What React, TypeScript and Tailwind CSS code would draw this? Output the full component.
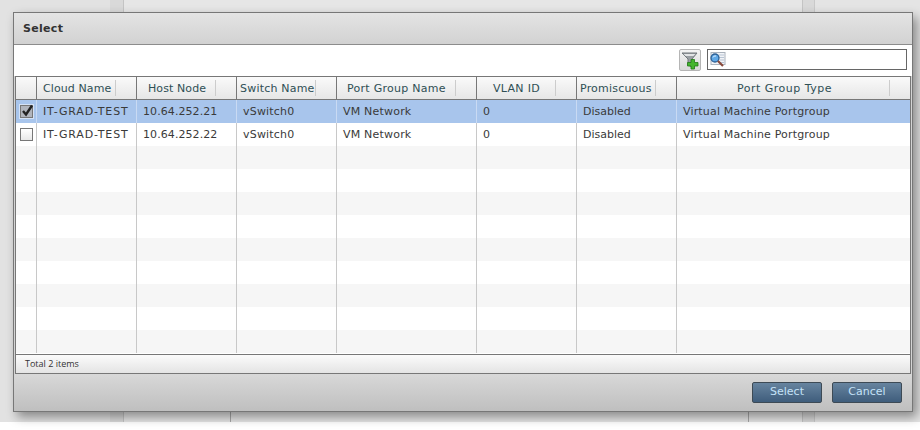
import React from 'react';

const font = { fontFamily: '"DejaVu Sans", Verdana, sans-serif' };

const columns = [
  { label: 'Cloud Name', width: 'w-[100px]', head: 'pl-[6px] tracking-[0.1px]' },
  { label: 'Host Node', width: 'w-[100px]', head: 'pl-[11px] tracking-[0.1px]' },
  { label: 'Switch Name', width: 'w-[100px]', head: 'pl-[3px] tracking-[0.2px]' },
  { label: 'Port Group Name', width: 'w-[140px]', head: 'pl-[10px] tracking-[0.27px]' },
  { label: 'VLAN ID', width: 'w-[100px]', head: 'pl-[16px] tracking-[0.3px]' },
  { label: 'Promiscuous', width: 'w-[100px]', head: 'pl-[3px] tracking-[0.2px]' },
  { label: 'Port Group Type', width: 'flex-1', head: 'pl-[60px] tracking-[0.5px]' },
];

const rows = [
  ['IT-GRAD-TEST', '10.64.252.21', 'vSwitch0', 'VM Network', '0', 'Disabled', 'Virtual Machine Portgroup'],
  ['IT-GRAD-TEST', '10.64.252.22', 'vSwitch0', 'VM Network', '0', 'Disabled', 'Virtual Machine Portgroup'],
];

const cellStyle = [
  'pl-[6px] tracking-[0.85px]',
  'pl-[6px] tracking-[0.08px]',
  'pl-[6px] tracking-[0.2px]',
  'pl-[6px] tracking-[0.2px]',
  'pl-[6px]',
  'pl-[6px]',
  'pl-[6px] tracking-[0.17px]',
];

function FilterIcon() {
  return (
    <svg width="20" height="20" viewBox="0 0 20 20">
      <path d="M2 3h15l-5 6v8l-4-2V9z" fill="#9a9fa3" stroke="#70777b" strokeWidth="1" />
      <path d="M3.500 4h12l-2 2h-8z" fill="#e2e4e5" />
      <path d="M11 9.500h3.500v3H18v3.500h-3.500v3H11v-3H7.500v-3.500H11z" fill="#45b52e" stroke="#1f7a14" strokeWidth="0.8" />
    </svg>
  );
}

function SearchIcon() {
  return (
    <svg width="17" height="17" viewBox="0 0 17 17">
      <rect x="2" y="1.500" width="14" height="12" fill="#f2f4f7" stroke="#aab2bc" />
      <path d="M9 4h6M10 6.500h5M11 9h4M11 11.500h4" stroke="#b8c4d4" strokeWidth="1" />
      <circle cx="6" cy="7" r="4" fill="#5fa8e6" stroke="#2c5f94" strokeWidth="1.300" />
      <path d="M4 6.500a2.500 2.500 0 0 1 3-1.500" stroke="#dff0ff" fill="none" />
      <path d="M9 10l5 5" stroke="#8a4a3c" strokeWidth="2.200" />
    </svg>
  );
}

export default function App() {
  const emptyRows = Array.from({ length: 9 });
  return (
    <div className="relative w-[920px] h-[430px] bg-white overflow-hidden text-[11px]" style={font}>
      {/* page behind the dialog */}
      <div className="flex h-[422px] bg-[#e6e6e6]">
        <div className="w-[110px] bg-[#e2e2e2]" />
        <div className="w-[14px] bg-[#d9d9d9] border-r border-[#c4c4c4]" />
        <div className="w-[107px] flex flex-col justify-end">
          <div className="h-[12px] border-r border-[#a8a8a8]" />
        </div>
        <div className="w-[518px] flex flex-col justify-end">
          <div className="h-[12px] border-r border-[#a8a8a8]" />
        </div>
        <div className="w-[54px] border-r border-[#c4c4c4]" />
        <div className="w-[12px] bg-[#d9d9d9] border-r border-[#c9c9c9]" />
        <div className="flex-1 bg-[#e4e4e4]" />
      </div>

      {/* dialog */}
      <div className="absolute left-[13px] top-[12px] w-[900px] h-[400px] flex flex-col border border-[#777777] shadow-[4px_5px_10px_rgba(0,0,0,0.4)] bg-[#d4d4d4]">
        <div className="h-[32px] shrink-0 flex items-center pl-[9px] pt-px bg-gradient-to-b from-[#e4e4e4] to-[#d2d2d2] border-b border-[#8c8c8c]">
          <span className="font-bold text-[11px] text-[#333333] tracking-[0.3px]">Select</span>
        </div>

        <div className="h-[31px] shrink-0 flex items-start justify-end gap-[6px] pt-[4px] pr-[5px] bg-white">
          <button className="w-[22px] h-[22px] flex items-center justify-center rounded-[2px] border border-[#b5b5b5] bg-gradient-to-b from-[#f4f4f4] to-[#d8d8d8]">
            <FilterIcon />
          </button>
          <div className="w-[200px] h-[21px] flex items-center pl-px bg-white border border-[#666666]">
            <SearchIcon />
          </div>
        </div>

        <div className="flex-1 min-h-0 flex flex-col ml-px mr-px border-x border-t border-[#777777] bg-white">
          <div className="h-[23px] shrink-0 flex bg-gradient-to-b from-[#fafafa] to-[#e6e6e6] border-b border-[#777777] text-[#2f4f55]">
            <div className="w-[20px] shrink-0" />
            {columns.map((c) => (
              <div key={c.label} className={`relative ${c.width} ${c.head} pt-[2px] flex items-center border-l border-[#777777] whitespace-nowrap`}>
                {c.label}
                <span className="absolute top-[3px] bottom-[3px] right-[20px] w-px bg-[#cccccc]" />
              </div>
            ))}
          </div>

          <div className="flex-1 min-h-0 overflow-hidden">
            {rows.map((r, i) => (
              <div key={i} className={`h-[23px] flex items-center text-[#3a3a3a] ${i === 0 ? 'bg-[#a8c5ec]' : 'bg-white'}`}>
                <div className="w-[20px] h-full shrink-0 flex items-center justify-center">
                  <div className={`w-[13px] h-[13px] relative border border-[#777777] shadow-[0_0_0_1px_rgba(255,255,255,0.5)] ${i === 0 ? 'bg-[#b0b4bc]' : 'bg-gradient-to-b from-[#ffffff] to-[#e8e8e8]'}`}>
                    {i === 0 && (
                      <svg className="absolute left-[-1px] top-[-3px]" width="15" height="15" viewBox="0 0 15 15">
                        <path d="M3 8l3 3.500 6-9" fill="none" stroke="#222222" strokeWidth="2.400" />
                      </svg>
                    )}
                  </div>
                </div>
                {r.map((v, j) => (
                  <div key={j} className={`${columns[j].width} ${cellStyle[j]} h-full pt-px flex items-center whitespace-nowrap ${i === 0 ? 'border-l border-[#c9daf3]' : 'border-l border-[#c8c8c8]'}`}>
                    {v}
                  </div>
                ))}
              </div>
            ))}
            {emptyRows.map((_, i) => (
              <div key={i} className={`h-[23px] flex ${i % 2 === 0 ? 'bg-[#f6f6f6]' : 'bg-white'}`}>
                <div className="w-[20px] shrink-0" />
                {columns.map((c) => (
                  <div key={c.label} className={`${c.width} border-l border-[#c8c8c8]`} />
                ))}
              </div>
            ))}
          </div>

          <div className="h-[20px] shrink-0 flex items-center pl-[9px] text-[9px] text-[#333333] border-t border-b border-[#777777] bg-gradient-to-b from-[#fbfbfb] to-[#e4e4e4]" style={{ fontFamily: '"Open Sans", sans-serif' }}>
            Total 2 items
          </div>
        </div>

        <div className="h-[37px] shrink-0 flex items-center justify-end gap-[10px] pr-[10px] bg-gradient-to-b from-[#d8d8d8] to-[#bfbfbf]">
          <button className="w-[70px] h-[21px] rounded-[2px] border border-[#3d4a55] bg-gradient-to-b from-[#67849f] to-[#3f5d7c] text-[#c4e2f8] text-[11px]">Select</button>
          <button className="w-[70px] h-[21px] rounded-[2px] border border-[#3d4a55] bg-gradient-to-b from-[#67849f] to-[#3f5d7c] text-[#c4e2f8] text-[11px]">Cancel</button>
        </div>
      </div>
    </div>
  );
}
